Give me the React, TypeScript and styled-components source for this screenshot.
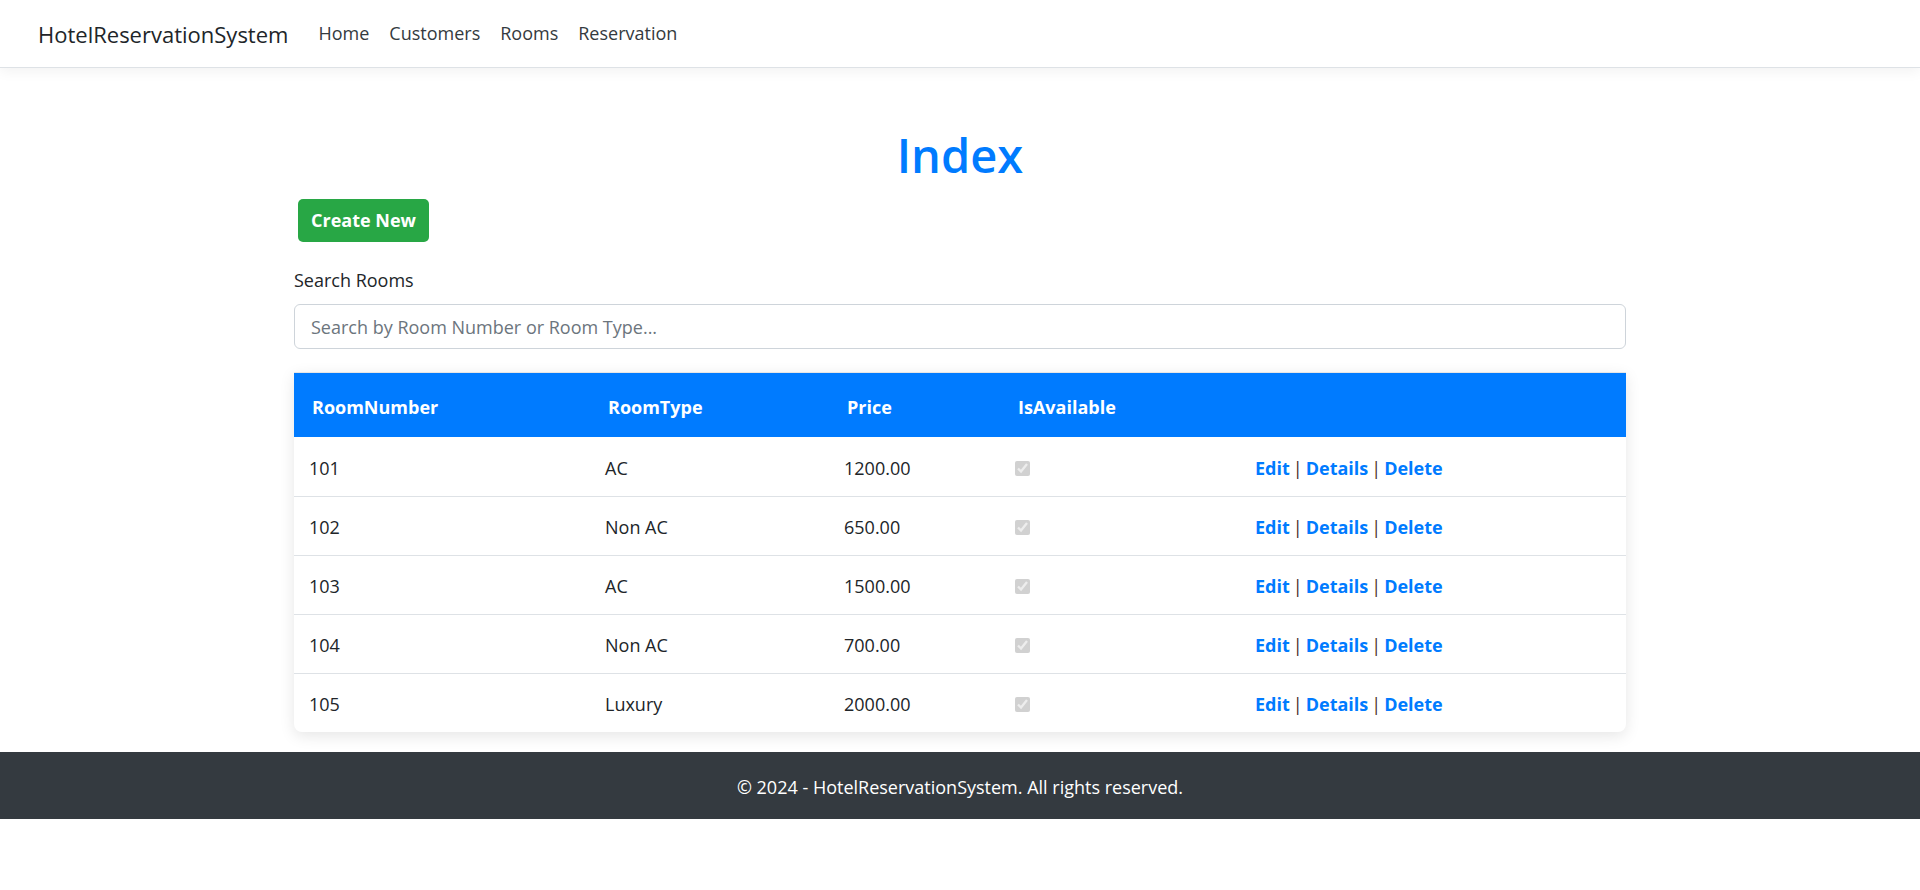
import React from "react";
import styled, {createGlobalStyle} from "styled-components";

interface Room {
  number: string;
  type: string;
  price: string;
  available: boolean;
}

const rooms: Room[] = [
  {number: "101", type: "AC", price: "1200.00", available: true},
  {number: "102", type: "Non AC", price: "650.00", available: true},
  {number: "103", type: "AC", price: "1500.00", available: true},
  {number: "104", type: "Non AC", price: "700.00", available: true},
  {number: "105", type: "Luxury", price: "2000.00", available: true},
];

const columns = [
  {label: "RoomNumber", width: 296},
  {label: "RoomType", width: 239},
  {label: "Price", width: 171},
  {label: "IsAvailable", width: 240},
  {label: "", width: 386},
];

const GlobalStyle = createGlobalStyle`
  body {
    margin: 0;
    background: white;
    color: #212529;
    font-family: "Open Sans", "Noto Sans", sans-serif;
    font-size: 18px;
    line-height: 1.5;
  }
`;

const Navbar = styled.header`
  align-items: center;
  background-color: white;
  border-bottom: 1px solid #dee2e6;
  box-shadow: 0 4px 12px rgba(0, 0, 0, 0.05);
  display: flex;
  height: 67px;
  padding: 0 38px;
`;

const Brand = styled.a`
  color: #212529;
  font-size: 22px;
  line-height: 33px;
  margin-right: 30px;
  margin-top: 2px;
  text-decoration: none;
`;

const NavList = styled.nav`
  display: flex;
  gap: 20px;
`;

const NavLink = styled.a`
  color: #343a40;
  font-size: 18px;
  line-height: 27px;
  text-decoration: none;
`;

const Main = styled.main`
  display: flex;
  flex-direction: column;
  margin: 0 auto;
  padding: 59px 0 20px;
  width: 1332px;
`;

const Title = styled.h1`
  color: #007bff;
  font-size: 47px;
  font-weight: 600;
  line-height: 1.2;
  margin: 0 0 16px;
  text-align: center;
`;

const CreateButton = styled.a`
  align-self: flex-start;
  background-color: #28a745;
  border-radius: 5px;
  color: white;
  font-weight: 700;
  line-height: 27px;
  margin-left: 4px;
  padding: 8px 13px;
  text-decoration: none;
`;

const Label = styled.label`
  display: block;
  margin: 25px 0 10px;
`;

const SearchInput = styled.input`
  border: 1px solid #ced4da;
  border-radius: 6px;
  box-sizing: border-box;
  color: #212529;
  font-family: inherit;
  font-size: 18px;
  height: 45px;
  padding: 8px 16px;
  width: 100%;

  &::placeholder {
    color: #6c757d;
  }
`;

const Table = styled.table`
  border-collapse: collapse;
  border-radius: 0 0 8px 8px;
  box-shadow: 0 4px 15px rgba(0, 0, 0, 0.1);
  margin-top: 23px;
  overflow: hidden;
  table-layout: fixed;
  width: 100%;
`;

const HeadRow = styled.tr`
  background-color: #007bff;
  border-top: 1px solid #e6e6e6;
`;

const HeadCell = styled.th`
  color: white;
  font-weight: 700;
  line-height: 26px;
  padding: 21px 18px 17px;
  text-align: left;
`;

const BodyRow = styled.tr`
  border-bottom: 1px solid #dee2e6;

  &:first-child td {
    padding-top: 18px;
  }

  &:last-child {
    border-bottom: none;
  }
`;

const Cell = styled.td`
  line-height: 27px;
  padding: 17px 15px 14px;
  vertical-align: middle;
`;

const Check = styled.input`
  display: block;
  height: 15px;
  margin: 0;
  width: 15px;
`;

const ActionLink = styled.a`
  color: #007bff;
  font-weight: 700;
  text-decoration: none;
`;

const Separator = styled.span`
  color: #4a2b25;
  padding: 0 3px;
`;

const Footer = styled.footer`
  background-color: #343a40;
  color: white;
  line-height: 27px;
  padding: 22px 0 18px;
  text-align: center;
`;

const App: React.FC = () => {
  return (
    <>
      <GlobalStyle />
      <Navbar>
        <Brand href="#">HotelReservationSystem</Brand>
        <NavList>
          <NavLink href="#">Home</NavLink>
          <NavLink href="#">Customers</NavLink>
          <NavLink href="#">Rooms</NavLink>
          <NavLink href="#">Reservation</NavLink>
        </NavList>
      </Navbar>
      <Main>
        <Title>Index</Title>
        <CreateButton href="#">Create New</CreateButton>
        <Label htmlFor="search">Search Rooms</Label>
        <SearchInput id="search" placeholder="Search by Room Number or Room Type..." />
        <Table>
          <colgroup>
            {columns.map((c, i) => (
              <col key={i} style={{width: c.width}} />
            ))}
          </colgroup>
          <thead>
            <HeadRow>
              {columns.map((c, i) => (
                <HeadCell key={i}>{c.label}</HeadCell>
              ))}
            </HeadRow>
          </thead>
          <tbody>
            {rooms.map((r) => (
              <BodyRow key={r.number}>
                <Cell>{r.number}</Cell>
                <Cell>{r.type}</Cell>
                <Cell>{r.price}</Cell>
                <Cell>
                  <Check type="checkbox" checked={r.available} disabled readOnly />
                </Cell>
                <Cell>
                  <ActionLink href="#">Edit</ActionLink>
                  <Separator>|</Separator>
                  <ActionLink href="#">Details</ActionLink>
                  <Separator>|</Separator>
                  <ActionLink href="#">Delete</ActionLink>
                </Cell>
              </BodyRow>
            ))}
          </tbody>
        </Table>
      </Main>
      <Footer>© 2024 - HotelReservationSystem. All rights reserved.</Footer>
    </>
  );
};

export default App;
